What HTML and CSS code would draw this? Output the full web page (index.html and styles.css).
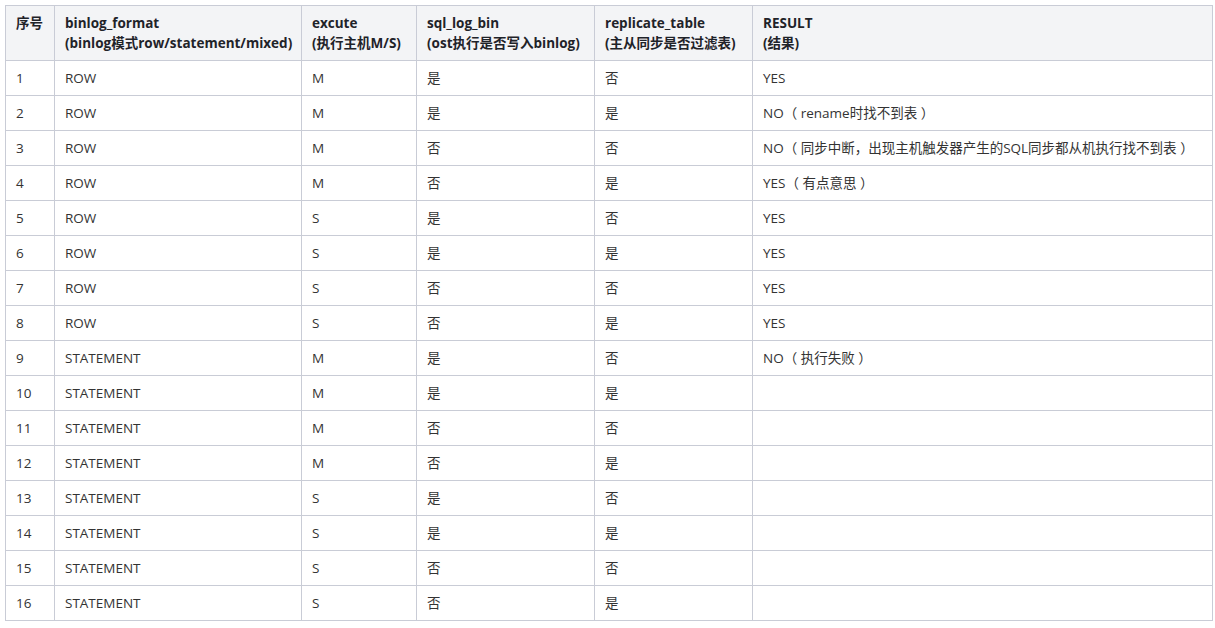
FILE: index.html
```html
<!DOCTYPE html>
<html lang="zh-CN">
<head>
<meta charset="utf-8">
<link rel="stylesheet" href="styles.css">
</head>
<body>
<table class="grid">
<colgroup>
<col class="c1"><col class="c2"><col class="c3"><col class="c4"><col class="c5"><col class="c6">
</colgroup>
<thead>
<tr>
<th>序号</th>
<th>binlog_format<br>(binlog模式row/statement/mixed)</th>
<th>excute<br>(执行主机M/S)</th>
<th>sql_log_bin<br>(ost执行是否写入binlog)</th>
<th>replicate_table<br>(主从同步是否过滤表)</th>
<th>RESULT<br>(结果)</th>
</tr>
</thead>
<tbody>
<tr><td>1</td><td>ROW</td><td>M</td><td>是</td><td>否</td><td>YES</td></tr>
<tr><td>2</td><td>ROW</td><td>M</td><td>是</td><td>是</td><td>NO（ rename时找不到表 ）</td></tr>
<tr><td>3</td><td>ROW</td><td>M</td><td>否</td><td>否</td><td>NO（ 同步中断，出现主机触发器产生的SQL同步都从机执行找不到表 ）</td></tr>
<tr><td>4</td><td>ROW</td><td>M</td><td>否</td><td>是</td><td>YES（ 有点意思 ）</td></tr>
<tr><td>5</td><td>ROW</td><td>S</td><td>是</td><td>否</td><td>YES</td></tr>
<tr><td>6</td><td>ROW</td><td>S</td><td>是</td><td>是</td><td>YES</td></tr>
<tr><td>7</td><td>ROW</td><td>S</td><td>否</td><td>否</td><td>YES</td></tr>
<tr><td>8</td><td>ROW</td><td>S</td><td>否</td><td>是</td><td>YES</td></tr>
<tr><td>9</td><td>STATEMENT</td><td>M</td><td>是</td><td>否</td><td>NO（ 执行失败 ）</td></tr>
<tr><td>10</td><td>STATEMENT</td><td>M</td><td>是</td><td>是</td><td></td></tr>
<tr><td>11</td><td>STATEMENT</td><td>M</td><td>否</td><td>否</td><td></td></tr>
<tr><td>12</td><td>STATEMENT</td><td>M</td><td>否</td><td>是</td><td></td></tr>
<tr><td>13</td><td>STATEMENT</td><td>S</td><td>是</td><td>否</td><td></td></tr>
<tr><td>14</td><td>STATEMENT</td><td>S</td><td>是</td><td>是</td><td></td></tr>
<tr><td>15</td><td>STATEMENT</td><td>S</td><td>否</td><td>否</td><td></td></tr>
<tr><td>16</td><td>STATEMENT</td><td>S</td><td>否</td><td>是</td><td></td></tr>
</tbody>
</table>
</body>
</html>
```
FILE: styles.css
```css
html, body {
  margin: 0;
  padding: 0;
  background: #ffffff;
}
body {
  padding: 5px 3px 0 5px;
  font-family: "Open Sans", "Noto Sans CJK SC", sans-serif;
  font-size: 13.5px;
  color: #333333;
}
.grid {
  border-collapse: collapse;
  table-layout: fixed;
  width: 1207px;
}
.c1 { width: 49px; }
.c2 { width: 247px; }
.c3 { width: 115px; }
.c4 { width: 178px; }
.c5 { width: 158px; }
.c6 { width: 460px; }
.grid th,
.grid td {
  border: 1px solid #c9ccd6;
  text-align: left;
  vertical-align: top;
  padding: 7px 10px 7px 10px;
  line-height: 20px;
  white-space: nowrap;
}
.grid th {
  background: #f3f4f6;
  font-weight: 700;
  color: #1f2329;
}
.grid td {
  height: 20px;
}
```
